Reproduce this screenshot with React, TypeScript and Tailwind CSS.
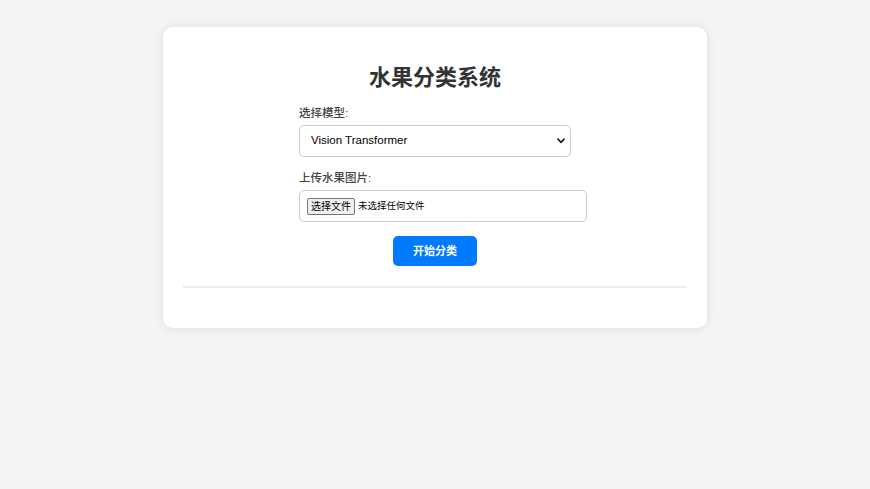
import { useState } from 'react';

export default function App() {
  const [model, setModel] = useState('vit');
  const [fileName, setFileName] = useState('');

  return (
    <div
      className="min-h-screen bg-[#f4f4f4] pt-[27px]"
      style={{ fontFamily: '"Liberation Sans", Arial, "Noto Sans CJK SC", sans-serif' }}
    >
      <div className="mx-auto w-[544px] rounded-[10px] bg-white px-5 pt-5 pb-10 shadow-[0_0_10px_rgba(0,0,0,0.1)]">
        {/* Title */}
        <h1 className="mt-[17px] text-center text-[22px] font-bold leading-[28px] text-[#333]">水果分类系统</h1>

        {/* Form */}
        <div className="mx-auto mt-[11px] flex w-[272px] flex-col">
          <label className="text-[11.5px] font-medium leading-[20px] text-[#444]">选择模型:</label>
          <div className="relative mt-[2px] h-[32px] w-[272px] shrink-0">
            <select
              value={model}
              onChange={(e) => setModel(e.target.value)}
              className="h-full w-full appearance-none rounded-[5px] border border-[#ccc] bg-white pl-[11px] pr-6 text-[11.5px] text-black outline-none"
            >
              <option value="vit">Vision Transformer</option>
              <option value="resnet">ResNet</option>
              <option value="cnn">CNN</option>
            </select>
            <svg
              className="pointer-events-none absolute top-[13px] right-[6px]"
              width="8"
              height="6"
              viewBox="0 0 8 6"
              fill="none"
            >
              <path d="M1 1.2 4 4.4 7 1.2" stroke="#222" strokeWidth="1.7" strokeLinecap="round" strokeLinejoin="round" />
            </svg>
          </div>

          <label className="mt-[11px] text-[11.5px] font-medium leading-[20px] text-[#444]">上传水果图片:</label>
          <label className="mt-[2px] flex h-[32px] w-[288px] shrink-0 cursor-pointer items-center rounded-[5px] border border-[#ccc] bg-white px-[7px]">
            <input
              type="file"
              className="hidden"
              onChange={(e) => setFileName(e.target.files?.[0]?.name ?? '')}
            />
            <span className="rounded-[2px] border border-[#767676] bg-[#efefef] px-[3px] text-[10px] leading-[15px] text-black">
              选择文件
            </span>
            <span className="ml-[3px] text-[9.5px] text-black">{fileName || '未选择任何文件'}</span>
          </label>
        </div>

        <div className="mt-[14px] flex justify-center">
          <button className="h-[30px] w-[84px] rounded-[5px] bg-[#007bff] text-[11px] font-bold text-white hover:bg-[#0069d9]">
            开始分类
          </button>
        </div>

        <hr className="mt-5 border-t-2 border-[#eee]" />
      </div>
    </div>
  );
}
